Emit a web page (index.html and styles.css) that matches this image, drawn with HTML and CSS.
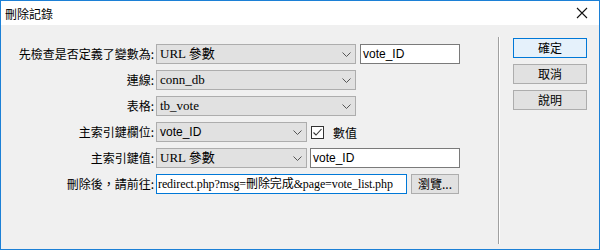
FILE: index.html
```html
<!DOCTYPE html>
<html lang="zh-Hant">
<head>
<meta charset="utf-8">
<title>刪除記錄</title>
<link rel="stylesheet" href="styles.css">
</head>
<body>
<div class="window">
  <div class="titlebar">
    <span class="title">刪除記錄</span>
    <svg class="close" width="12" height="12" viewBox="0 0 12 12"><path d="M1 1 L11 11 M11 1 L1 11" stroke="#111" stroke-width="1.1" fill="none"/></svg>
  </div>
  <div class="body">
    <div class="form">
      <div class="label">先檢查是否定義了變數為:</div>
      <div class="ctrls">
        <div class="select w-long"><span class="val serif">URL 參數</span><svg class="chev" width="9" height="5" viewBox="0 0 9 5"><path d="M0.5 0.5 L4.5 4.5 L8.5 0.5" stroke="#555" fill="none"/></svg></div>
        <div class="input w-short sans">vote_ID</div>
      </div>
      <div class="label">連線:</div>
      <div class="ctrls">
        <div class="select w-long"><span class="val serif">conn_db</span><svg class="chev" width="9" height="5" viewBox="0 0 9 5"><path d="M0.5 0.5 L4.5 4.5 L8.5 0.5" stroke="#555" fill="none"/></svg></div>
      </div>
      <div class="label">表格:</div>
      <div class="ctrls">
        <div class="select w-long"><span class="val serif">tb_vote</span><svg class="chev" width="9" height="5" viewBox="0 0 9 5"><path d="M0.5 0.5 L4.5 4.5 L8.5 0.5" stroke="#555" fill="none"/></svg></div>
      </div>
      <div class="label">主索引鍵欄位:</div>
      <div class="ctrls">
        <div class="select w-mid"><span class="val sans">vote_ID</span><svg class="chev" width="9" height="5" viewBox="0 0 9 5"><path d="M0.5 0.5 L4.5 4.5 L8.5 0.5" stroke="#555" fill="none"/></svg></div>
        <span class="check"><svg width="11" height="11" viewBox="0 0 11 11"><path d="M1.5 5.5 L4 8 L9.5 2" stroke="#333" stroke-width="1.1" fill="none"/></svg></span>
        <span class="checklabel">數值</span>
      </div>
      <div class="label">主索引鍵值:</div>
      <div class="ctrls">
        <div class="select w-mid"><span class="val serif">URL 參數</span><svg class="chev" width="9" height="5" viewBox="0 0 9 5"><path d="M0.5 0.5 L4.5 4.5 L8.5 0.5" stroke="#555" fill="none"/></svg></div>
        <div class="input w-short2 sans">vote_ID</div>
      </div>
      <div class="label">刪除後，請前往:</div>
      <div class="ctrls">
        <div class="input focus w-url url">redirect.php?msg=刪除完成&amp;page=vote_list.php</div>
        <div class="btn browse">瀏覽...</div>
      </div>
    </div>
    <div class="sep"></div>
    <div class="buttons">
      <div class="btn side default">確定</div>
      <div class="btn side">取消</div>
      <div class="btn side">說明</div>
    </div>
  </div>
</div>
</body>
</html>
```
FILE: styles.css
```css
html, body {
  margin: 0;
  padding: 0;
}
body {
  font-family: "Noto Sans CJK TC", "Liberation Sans", sans-serif;
  font-size: 12px;
  color: #000;
}
.window {
  width: 600px;
  height: 250px;
  box-sizing: border-box;
  border: 1px solid #1c80d6;
  display: flex;
  flex-direction: column;
  background: #f0f0f0;
}
.titlebar {
  height: 24px;
  background: #fff;
  display: flex;
  align-items: center;
  justify-content: space-between;
  padding: 0 11px 0 4px;
  flex: none;
}
.title {
  font-size: 12px;
  color: #000;
}
.body {
  flex: 1;
  display: flex;
}
.form {
  width: 497px;
  padding-top: 19px;
  display: grid;
  grid-template-columns: 153px auto;
  grid-auto-rows: 20px;
  row-gap: 6px;
  column-gap: 2px;
  align-content: start;
}
.label {
  text-align: right;
  line-height: 20px;
  white-space: nowrap;
  color: #000;
}
.ctrls {
  display: flex;
  align-items: center;
  gap: 3px;
}
.select {
  box-sizing: border-box;
  height: 20px;
  background: #e1e1e1;
  border: 1px solid #adadad;
  display: flex;
  align-items: center;
  justify-content: space-between;
  padding: 0 4px 0 3px;
}
.w-long { width: 200px; }
.w-mid { width: 151px; }
.chev { flex: none; }
.val {
  font-size: 13px;
  line-height: 18px;
}
.serif { font-family: "Liberation Serif", "Noto Sans CJK TC", serif; }
.sans { font-family: "Liberation Sans", "Noto Sans CJK TC", sans-serif; font-size: 12px; }
.input {
  box-sizing: border-box;
  height: 20px;
  background: #fff;
  border: 1px solid #7a7a7a;
  line-height: 18px;
  padding: 0 2px;
  white-space: nowrap;
  overflow: hidden;
}
.url {
  font-family: "Liberation Serif", "Noto Sans CJK TC", serif;
  font-size: 12px;
  letter-spacing: -0.1px;
  padding: 0 1px;
}
.input.focus { border-color: #0078d7; }
.w-short { width: 100px; margin-left: 1px; }
.w-short2 { width: 150px; }
.w-url { width: 251px; }
.check {
  box-sizing: border-box;
  width: 13px;
  height: 13px;
  border: 1px solid #333;
  background: #fff;
  display: flex;
  align-items: center;
  justify-content: center;
  margin-left: 1px;
}
.check svg { display: block; }
.checklabel {
  margin-left: 6px;
}
.btn {
  box-sizing: border-box;
  background: #e1e1e1;
  border: 1px solid #adadad;
  text-align: center;
  color: #000;
}
.browse {
  width: 48px;
  height: 20px;
  line-height: 18px;
  margin-left: 1px;
}
.sep {
  width: 1px;
  border-right: 1px solid #fff;
  background: #a0a0a0;
  margin: 12px 0 5px;
}
.buttons {
  margin: 13px 0 0 13px;
  display: flex;
  flex-direction: column;
  gap: 6px;
}
.side {
  width: 74px;
  height: 20px;
  line-height: 18px;
}
.side.default {
  background: #e5f1fb;
  border-color: #0078d7;
}
```
